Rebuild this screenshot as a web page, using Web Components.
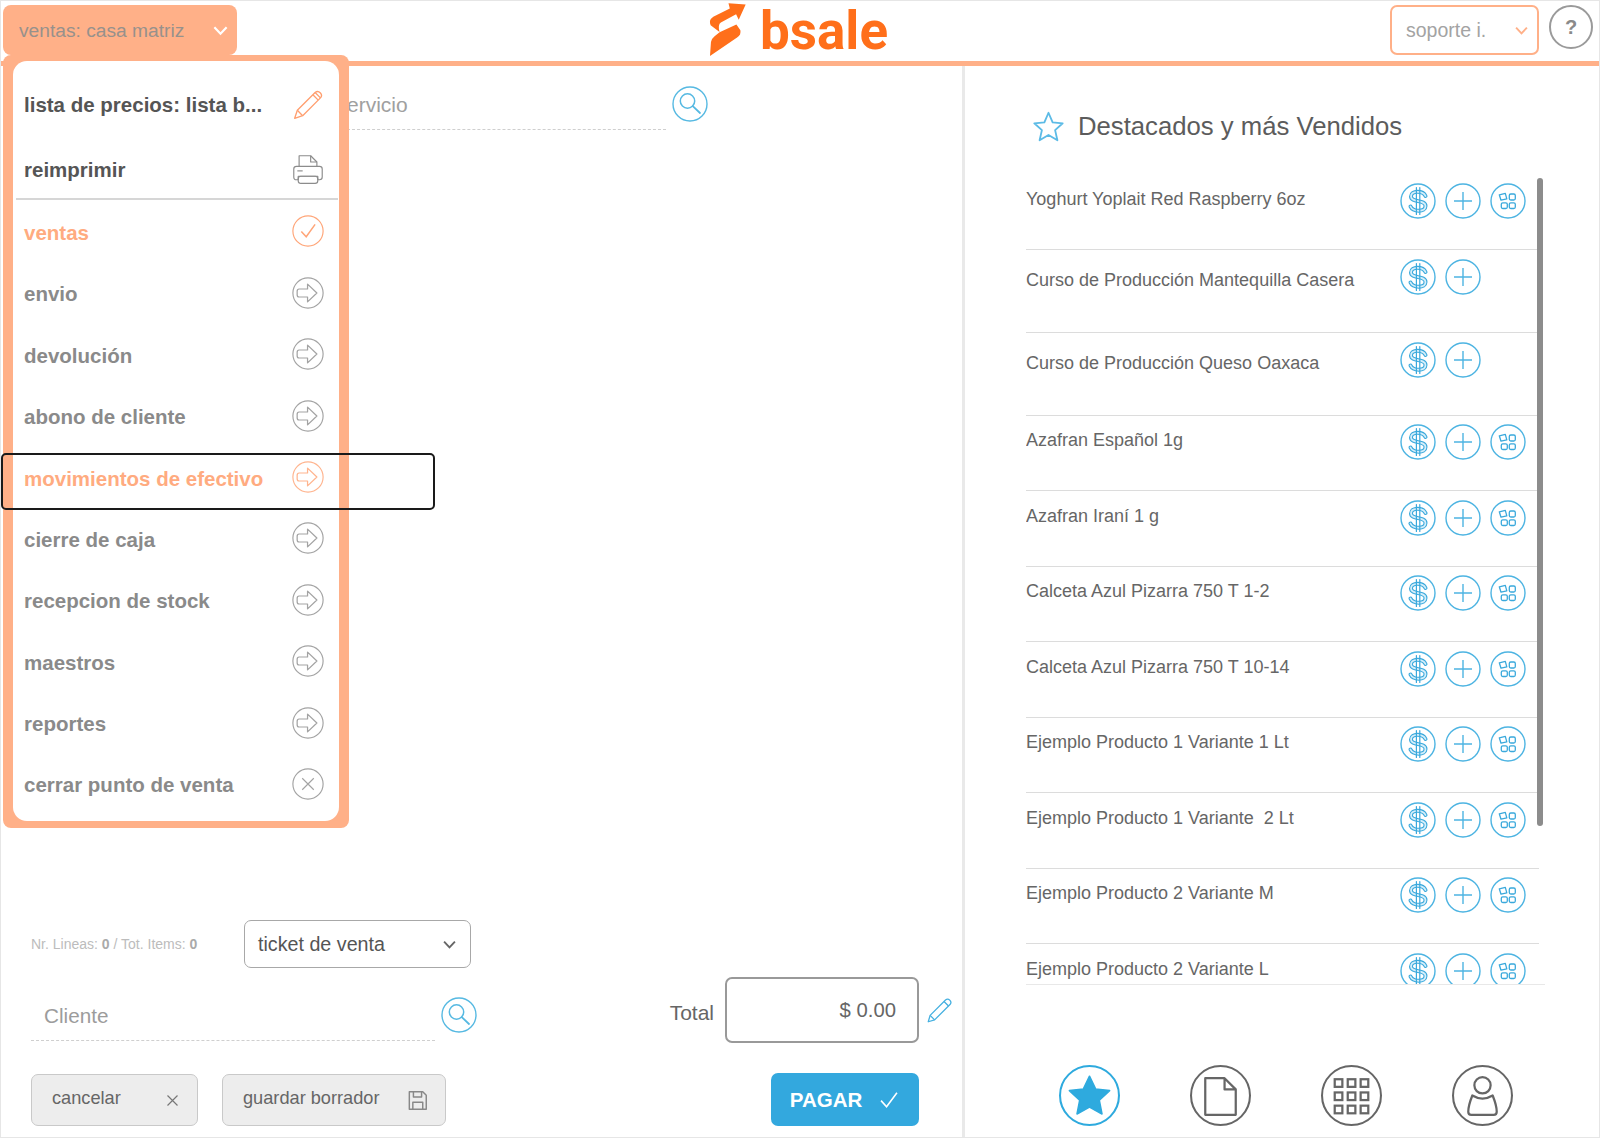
<!DOCTYPE html>
<html lang="es">
<head>
<meta charset="utf-8">
<title>bsale</title>
<style>
  html, body { margin: 0; background: #fff; }
  body { font-family: "Liberation Sans", Arial, sans-serif; }
</style>
</head>
<body>
<bs-app>
  <bs-topbar slot="top"></bs-topbar>
  <bs-menu slot="menu">
    <bs-menu-item icon="pencil" tone="dark">lista de precios: lista b...</bs-menu-item>
    <bs-menu-item icon="printer" tone="dark" divided>reimprimir</bs-menu-item>
    <bs-menu-item icon="check" tone="active">ventas</bs-menu-item>
    <bs-menu-item icon="arrow">envio</bs-menu-item>
    <bs-menu-item icon="arrow">devolución</bs-menu-item>
    <bs-menu-item icon="arrow">abono de cliente</bs-menu-item>
    <bs-menu-item icon="arrow" tone="active" focused>movimientos de efectivo</bs-menu-item>
    <bs-menu-item icon="arrow">cierre de caja</bs-menu-item>
    <bs-menu-item icon="arrow">recepcion de stock</bs-menu-item>
    <bs-menu-item icon="arrow">maestros</bs-menu-item>
    <bs-menu-item icon="arrow">reportes</bs-menu-item>
    <bs-menu-item icon="cross">cerrar punto de venta</bs-menu-item>
  </bs-menu>
  <bs-sale slot="left"></bs-sale>
  <bs-products slot="right">
    <bs-product>Yoghurt Yoplait Red Raspberry 6oz</bs-product>
    <bs-product simple>Curso de Producción Mantequilla Casera</bs-product>
    <bs-product simple>Curso de Producción Queso Oaxaca</bs-product>
    <bs-product>Azafran Español 1g</bs-product>
    <bs-product>Azafran Iraní 1 g</bs-product>
    <bs-product>Calceta Azul Pizarra 750 T 1-2</bs-product>
    <bs-product>Calceta Azul Pizarra 750 T 10-14</bs-product>
    <bs-product>Ejemplo Producto 1 Variante 1 Lt</bs-product>
    <bs-product>Ejemplo Producto 1 Variante &nbsp;2 Lt</bs-product>
    <bs-product>Ejemplo Producto 2 Variante M</bs-product>
    <bs-product>Ejemplo Producto 2 Variante L</bs-product>
  </bs-products>
</bs-app>

<script>
const ring = '<circle cx="18" cy="18" r="17" fill="none" stroke="currentColor" stroke-width="1.4"/>';
const ICONS = {
  search: ring + '<circle cx="15.5" cy="15" r="7.2" fill="none" stroke="currentColor" stroke-width="1.5"/><path d="M20.8 20.2 28 27" stroke="currentColor" stroke-width="1.8" stroke-linecap="round"/>',
  dollar: ring + '<g fill="none" stroke-linecap="round"><path d="M25.5 13C23 7.5 11 7.300 11 13.500 11 20 25.500 16.200 25.500 23 25.500 29.500 13 29 10.500 23.500" stroke="#3aa9dc" stroke-width="4"/><path d="M25.500 13C23 7.500 11 7.300 11 13.500 11 20 25.500 16.200 25.500 23 25.500 29.500 13 29 10.500 23.500" stroke="#d5eefa" stroke-width="1.800"/><path d="M16.400 4.500V31.500M19.800 4.500V31.500" stroke="#3aa9dc" stroke-width="1.200"/></g>',
  plus: ring + '<path d="M18 9V27M9 18H27" stroke="currentColor" stroke-width="1.4"/>',
  variants: ring + '<g fill="none" stroke="#3aa9dc" stroke-width="1.300"><path d="M9.300 11.800 15.300 10.300 16.800 15.800 11 17.200Z" stroke-linejoin="round"/><rect x="19.300" y="11" width="6" height="6" rx="1.500"/><rect x="11.300" y="19.800" width="6" height="5.700" rx="1.500"/><rect x="19.300" y="19.800" width="6" height="5.700" rx="1.500"/></g>',
  arrow: '<circle cx="18" cy="18" r="17" fill="none" stroke="currentColor" stroke-width="1.3"/><path d="M8 13.500H17.500V8L28 18 17.500 28V22.500H8Q5.800 22.500 5.800 20V16Q5.800 13.500 8 13.500Z" fill="none" stroke="currentColor" stroke-width="1.4" stroke-linejoin="round"/>',
  check: '<circle cx="18" cy="18" r="17" fill="none" stroke="currentColor" stroke-width="1.3"/><path d="M10.500 18.500 16 24.500 26 10.500" fill="none" stroke="currentColor" stroke-width="1.700"/>',
  cross: '<circle cx="18" cy="18" r="17" fill="none" stroke="currentColor" stroke-width="1.3"/><path d="M11.500 11.500 24.500 24.500M24.500 11.500 11.500 24.500" stroke="currentColor" stroke-width="1.300"/>',
  pencil: '<g fill="none" stroke="currentColor" stroke-width="1.500" stroke-linejoin="round"><path d="M3 33 6 24 26 4Q29 1.500 32 4.500 34.500 7.500 32 10L12 30Z"/><path d="M6 24 12 30M23.500 6.500 29.500 12.500M26 4 32 10"/></g>',
  printer: '<g fill="none" stroke="currentColor" stroke-width="1.300" stroke-linejoin="round"><path d="M8 14V2H21L28 9V14"/><path d="M21 2V9H28"/><path d="M5 14H31Q34 14 34 17V26Q34 29 31 29H29V25H7V29H5Q2 29 2 26V17Q2 14 5 14Z"/><rect x="7" y="25" width="22" height="8" rx="3"/><path d="M6 19H12"/></g>',
  starOutline: '<path d="M18 3 22.500 13.500 33.500 14.500 25.200 22 27.700 33 18 27.200 8.300 33 10.800 22 2.500 14.500 13.500 13.500Z" fill="none" stroke="currentColor" stroke-width="2" stroke-linejoin="round"/>',
  penBlue: '<g fill="none" stroke="currentColor" stroke-width="1.700" stroke-linejoin="round"><path d="M3 33 5.500 24.500 26 4Q29 1.500 32 4.500 34.500 7.500 32 10L11.500 30.500Z"/><path d="M5.500 24.500 11.500 30.500M24 6 30 12"/></g>',
  close: '<path d="M6 6 30 30M30 6 6 30" stroke="currentColor" stroke-width="2.800"/>',
  save: '<g fill="none" stroke="currentColor" stroke-width="2.500" stroke-linejoin="round"><path d="M4 3H27L33 9V33H4Z"/><path d="M11 3V12H25V3M10 33V21H27V33"/></g>',
  tick: '<path d="M5 19 14 29 31 6" fill="none" stroke="currentColor" stroke-width="2.600"/>',
  chevron: '<path d="M5 11 18 25 31 11" fill="none" stroke="currentColor" stroke-width="4.500"/>',
  navStar: '<circle cx="30" cy="30" r="29" fill="none" stroke="currentColor" stroke-width="2"/><path d="M30 11 36 23.500 49.800 25.200 39.700 34.700 42.300 48.200 30 41.500 17.700 48.200 20.300 34.700 10.200 25.200 24 23.500Z" fill="currentColor" stroke="currentColor" stroke-width="1.500" stroke-linejoin="round"/>',
  navDoc: '<circle cx="30" cy="30" r="29" fill="none" stroke="currentColor" stroke-width="2"/><path d="M15 13H34L45 24V49H15Z M34 13V24H45" fill="none" stroke="currentColor" stroke-width="2.200" stroke-linejoin="round"/>',
  navGrid: '<circle cx="30" cy="30" r="29" fill="none" stroke="currentColor" stroke-width="2"/><g fill="none" stroke="currentColor" stroke-width="2.200"><rect x="13.500" y="14" width="7.500" height="7.500"/><rect x="26.300" y="14" width="7.500" height="7.500"/><rect x="39" y="14" width="7.500" height="7.500"/><rect x="13.500" y="27" width="7.500" height="7.500"/><rect x="26.300" y="27" width="7.500" height="7.500"/><rect x="39" y="27" width="7.500" height="7.500"/><rect x="13.500" y="40" width="7.500" height="7.500"/><rect x="26.300" y="40" width="7.500" height="7.500"/><rect x="39" y="40" width="7.500" height="7.500"/></g>',
  navUser: '<circle cx="30" cy="30" r="29" fill="none" stroke="currentColor" stroke-width="2"/><g fill="none" stroke="currentColor" stroke-width="2.200" stroke-linejoin="round"><circle cx="30" cy="20" r="8"/><path d="M20 30Q30 36 40 30 44 40 44 46 44 49 41 49H19Q16 49 16 46 16 40 20 30Z"/></g>'
};
const BOXES = { navStar: 60, navDoc: 60, navGrid: 60, navUser: 60 };

class BsIcon extends HTMLElement {
  connectedCallback() {
    const name = this.getAttribute('name');
    const size = this.getAttribute('size') || 36;
    const box = BOXES[name] || 36;
    this.attachShadow({ mode: 'open' }).innerHTML = `
      <style>
        :host { display: inline-flex; flex: none; width: ${size}px; height: ${size}px; color: ${this.getAttribute('color') || 'inherit'}; }
        svg { display: block; width: 100%; height: 100%; overflow: visible; }
      </style>
      <svg viewBox="0 0 ${box} ${box}" aria-hidden="true">${ICONS[name]}</svg>`;
  }
}
customElements.define('bs-icon', BsIcon);

const appTemplate = document.createElement('template');
appTemplate.innerHTML = `
  <style>
    :host { display: block; position: relative; box-sizing: border-box; width: 1600px; height: 1138px; border: 1px solid #e6e6e6; overflow: hidden; background: #fff; }
    .main { display: grid; grid-template-columns: 961px 3px 1fr; height: 1071px; }
    .rule { background: #e9e9e9; }
    .menu { position: absolute; left: 2px; top: 54px; z-index: 2; }
  </style>
  <slot name="top"></slot>
  <div class="main">
    <slot name="left"></slot>
    <div class="rule"></div>
    <slot name="right"></slot>
  </div>
  <div class="menu"><slot name="menu"></slot></div>
`;
class BsApp extends HTMLElement {
  constructor() {
    super();
    this.attachShadow({ mode: 'open' }).appendChild(appTemplate.content.cloneNode(true));
  }
}
customElements.define('bs-app', BsApp);

const topbarTemplate = document.createElement('template');
topbarTemplate.innerHTML = `
  <style>
    :host { display: grid; grid-template-columns: 1fr auto 1fr; box-sizing: border-box; height: 65px; border-bottom: 5px solid #ffb088; padding: 4px 0 0 2px; }
    .venta { display: flex; align-items: center; justify-content: space-between; box-sizing: border-box; width: 234px; height: 50px; padding: 1px 8px 0 16px; background: #ffb088; border-radius: 8px; color: #97918c; font-size: 19.200px; position: relative; z-index: 3; }
    .venta bs-icon { color: #fff; }
    .logo { display: flex; align-items: flex-start; gap: 14px; color: #ff6f1a; margin: -3px 6px 0 0; height: 56px; }
    .logo svg { width: 38px; height: 55px; display: block; }
    .word { font: 700 53px/62px Roboto, sans-serif; margin-top: -2px; }
    .right { display: flex; justify-content: flex-end; align-items: flex-start; gap: 10px; padding-right: 6px; }
    .soporte { display: flex; align-items: center; justify-content: space-between; box-sizing: border-box; width: 149px; height: 50px; padding: 0 8px 0 14px; border: 2px solid #ffb088; border-radius: 7px; color: #a3a3a3; font-size: 19.500px; }
    .soporte bs-icon { color: #ffb088; }
    .help { display: flex; align-items: center; justify-content: center; box-sizing: border-box; width: 44px; height: 44px; border: 2px solid #9a9a9a; border-radius: 50%; color: #8a8a8a; font: 700 20px "Liberation Sans", sans-serif; }
  </style>
  <div><div class="venta"><span>ventas: casa matriz</span><bs-icon name="chevron" size="17"></bs-icon></div></div>
  <div class="logo">
    <svg viewBox="170 5 115 165" aria-hidden="true"><path fill="currentColor" d="M176 62Q177 55 186 49L236 24 232 8 284 12 263 58 255 41 209 66Q199 72 205 95L178 75Q175 70 176 62ZM205 96 256 72 268 90Q271 104 258 112L176 168 179 125Q180 116 190 108Z"/></svg>
    <span class="word">bsale</span>
  </div>
  <div class="right">
    <div class="soporte"><span>soporte i.</span><bs-icon name="chevron" size="15"></bs-icon></div>
    <div class="help">?</div>
  </div>
`;
class BsTopbar extends HTMLElement {
  constructor() {
    super();
    this.attachShadow({ mode: 'open' }).appendChild(topbarTemplate.content.cloneNode(true));
  }
}
customElements.define('bs-topbar', BsTopbar);

const menuTemplate = document.createElement('template');
menuTemplate.innerHTML = `
  <style>
    :host { display: block; box-sizing: border-box; width: 346px; height: 773px; padding: 6px 10px 7px; background: #ffb088; border-radius: 8px; }
    .sheet { box-sizing: border-box; height: 100%; padding: 13px 0 0; background: #fff; border-radius: 14px; }
  </style>
  <div class="sheet"><slot></slot></div>
`;
class BsMenu extends HTMLElement {
  constructor() {
    super();
    this.attachShadow({ mode: 'open' }).appendChild(menuTemplate.content.cloneNode(true));
  }
}
customElements.define('bs-menu', BsMenu);

const ITEM_COLORS = { dark: '#555', active: '#ffab80' };
const ICON_COLORS = { pencil: '#ff9f70', printer: '#8c8c8c', check: '#ffa578', arrow: '#a3a3a3', cross: '#a3a3a3' };
class BsMenuItem extends HTMLElement {
  connectedCallback() {
    const tone = this.getAttribute('tone');
    const icon = this.getAttribute('icon');
    const color = ITEM_COLORS[tone] || '#8a8a8a';
    const iconColor = tone === 'active' && icon === 'arrow' ? '#ffb48e' : ICON_COLORS[icon];
    const divided = this.hasAttribute('divided');
    this.attachShadow({ mode: 'open' }).innerHTML = `
      <style>
        :host { display: flex; align-items: center; justify-content: space-between; box-sizing: border-box; position: relative; height: 61.400px; padding: 0 15px 0 11px; color: ${color}; font-size: 20.500px; font-weight: 700; white-space: nowrap; }
        :host([divided]) { margin: 4px 0 1.500px; }
        bs-icon { margin-top: ${tone === 'dark' ? 0 : -3}px; }
        .line { position: absolute; left: 3px; right: 1px; bottom: 1px; height: 1.500px; background: #d6d6d6; }
        .focus { position: absolute; left: -12px; top: 5.500px; box-sizing: border-box; width: 434px; height: 57px; border: 2px solid #1a1a1a; border-radius: 5px; }
      </style>
      <slot></slot>
      <bs-icon name="${icon}" size="32" color="${iconColor}"></bs-icon>
      ${divided ? '<div class="line"></div>' : ''}
      ${this.hasAttribute('focused') ? '<div class="focus"></div>' : ''}`;
  }
}
customElements.define('bs-menu-item', BsMenuItem);

const buttonTemplate = document.createElement('template');
buttonTemplate.innerHTML = `
  <style>
    :host { display: flex; align-items: center; justify-content: space-between; box-sizing: border-box; height: 52px; padding: 0 17px 0 20px; background: #ededed; border: 1.500px solid #c9c9c9; border-radius: 7px; color: #666; font-size: 18.200px; }
    span { margin-top: -3px; }
    ::slotted(bs-icon) { margin-top: 2px; }
  </style>
  <span><slot></slot></span>
  <slot name="icon"></slot>
`;
class BsButton extends HTMLElement {
  constructor() {
    super();
    this.attachShadow({ mode: 'open' }).appendChild(buttonTemplate.content.cloneNode(true));
  }
}
customElements.define('bs-button', BsButton);

const saleTemplate = document.createElement('template');
saleTemplate.innerHTML = `
  <style>
    :host { display: flex; flex-direction: column; justify-content: space-between; box-sizing: border-box; height: 100%; padding: 18px 43px 11px 30px; color: #666; }
    .search { display: flex; align-items: flex-start; gap: 6px; }
    .search bs-icon { margin-top: 2px; }
    .find { flex: none; width: 635px; height: 46px; box-sizing: border-box; padding-left: 316px; border-bottom: 1.500px dashed #cfcfcf; color: #a0a0a0; font-size: 21px; line-height: 42px; white-space: nowrap; }
    .rows { display: flex; flex-direction: column; }
    .row { display: flex; align-items: center; }
    .meta { width: 213px; color: #bcbcbc; font-size: 14px; white-space: nowrap; }
    .meta b { color: #aaa; }
    .doc { display: flex; align-items: center; justify-content: space-between; box-sizing: border-box; width: 227px; height: 48px; padding: 0 13px; border: 1.500px solid #a8a8a8; border-radius: 7px; color: #555; font-size: 19.700px; }
    .doc bs-icon { color: #666; }
    .customer { margin-top: 9px; }
    .client { width: 404px; height: 51px; box-sizing: border-box; padding: 13px 0 0 13px; border-bottom: 1.500px dashed #cfcfcf; color: #9c9c9c; font-size: 20.700px; line-height: 26px; align-self: flex-start; margin-top: 13px; }
    .customer > bs-icon { margin-left: 6px; margin-top: 10px; }
    .total { display: flex; align-items: center; margin-left: auto; font-size: 21px; }
    .total > span { padding-top: 6px; }
    .total-wrap { position: relative; display: flex; align-items: center; margin-left: 11px; }
    .amount { box-sizing: border-box; width: 194px; height: 66px; padding: 0 21px 0 0; display: flex; align-items: center; justify-content: flex-end; border: 2px solid #999; border-radius: 7px; color: #666; font-size: 20.300px; }
    .pen { position: absolute; left: 100%; margin-left: 7px; top: 20px; }
    .actions { margin-top: 30px; gap: 24px; }
    .pay { display: flex; align-items: center; justify-content: center; gap: 16px; box-sizing: border-box; width: 148px; height: 53px; margin-left: auto; background: #33a8de; border-radius: 7px; color: #fff; font-size: 20.500px; font-weight: 700; }
  </style>
  <div class="search">
    <div class="find">ervicio</div>
    <bs-icon name="search" size="36" color="#56b9e2"></bs-icon>
  </div>
  <div class="rows">
    <div class="row">
      <div class="meta">Nr. Lineas: <b>0</b> / Tot. Items: <b>0</b></div>
      <div class="doc"><span>ticket de venta</span><bs-icon name="chevron" size="15"></bs-icon></div>
    </div>
    <div class="row customer">
      <div class="client">Cliente</div>
      <bs-icon name="search" size="36" color="#56b9e2"></bs-icon>
      <div class="total"><span>Total</span>
        <div class="total-wrap"><div class="amount">$ 0.00</div><bs-icon class="pen" name="penBlue" size="27" color="#45b0e0"></bs-icon></div>
      </div>
    </div>
    <div class="row actions">
      <bs-button style="width:167px">cancelar<bs-icon slot="icon" name="close" size="15" color="#777"></bs-icon></bs-button>
      <bs-button style="width:224px">guardar borrador<bs-icon slot="icon" name="save" size="21" color="#888"></bs-icon></bs-button>
      <div class="pay"><span>PAGAR</span><bs-icon name="tick" size="22"></bs-icon></div>
    </div>
  </div>
`;
class BsSale extends HTMLElement {
  constructor() {
    super();
    this.attachShadow({ mode: 'open' }).appendChild(saleTemplate.content.cloneNode(true));
  }
}
customElements.define('bs-sale', BsSale);

const productsTemplate = document.createElement('template');
productsTemplate.innerHTML = `
  <style>
    :host { display: flex; flex-direction: column; box-sizing: border-box; height: 100%; padding: 0 0 0 61px; position: relative; }
    h2 { display: flex; align-items: center; gap: 13.500px; height: 108px; margin: 0 0 0 5.500px; padding: 12px 0 0 0; box-sizing: border-box; color: #5c5c5c; font-size: 25.700px; font-weight: 400; }
    .list { position: relative; box-sizing: border-box; height: 811px; width: 519px; overflow: hidden; border-bottom: 1px solid #e8e8e8; }
    .thumb { position: absolute; left: 511px; top: 4px; width: 6px; height: 648px; border-radius: 3px; background: #8c8c8c; }
    nav { display: flex; gap: 70px; margin: 80px 0 0 33px; color: #666; }
  </style>
  <h2><bs-icon name="starOutline" size="33" color="#5cbbe6"></bs-icon><span>Destacados y más Vendidos</span></h2>
  <div class="list"><slot></slot><div class="thumb"></div></div>
  <nav>
    <bs-icon name="navStar" size="61" color="#2eaade"></bs-icon>
    <bs-icon name="navDoc" size="61"></bs-icon>
    <bs-icon name="navGrid" size="61"></bs-icon>
    <bs-icon name="navUser" size="61"></bs-icon>
  </nav>
`;
class BsProducts extends HTMLElement {
  constructor() {
    super();
    this.attachShadow({ mode: 'open' }).appendChild(productsTemplate.content.cloneNode(true));
  }
}
customElements.define('bs-products', BsProducts);

class BsProduct extends HTMLElement {
  connectedCallback() {
    const simple = this.hasAttribute('simple');
    this.attachShadow({ mode: 'open' }).innerHTML = `
      <style>
        :host { display: flex; justify-content: space-between; box-sizing: border-box; width: 513px; height: ${simple ? 83 : 75.500}px; border-bottom: 1.500px solid #dcdcdc; color: #666; font-size: 18px; }
        .name { padding-top: ${simple ? 18 : 12.500}px; line-height: 24px; white-space: nowrap; }
        .tools { display: flex; gap: 9px; width: 126px; flex: none; padding-top: ${simple ? 9.500 : 8.500}px; margin-right: 13px; color: #4db4e2; height: 36px; }
      </style>
      <div class="name"><slot></slot></div>
      <div class="tools">
        <bs-icon name="dollar" size="36"></bs-icon>
        <bs-icon name="plus" size="36"></bs-icon>
        ${simple ? '' : '<bs-icon name="variants" size="36"></bs-icon>'}
      </div>`;
  }
}
customElements.define('bs-product', BsProduct);
</script>
</body>
</html>
